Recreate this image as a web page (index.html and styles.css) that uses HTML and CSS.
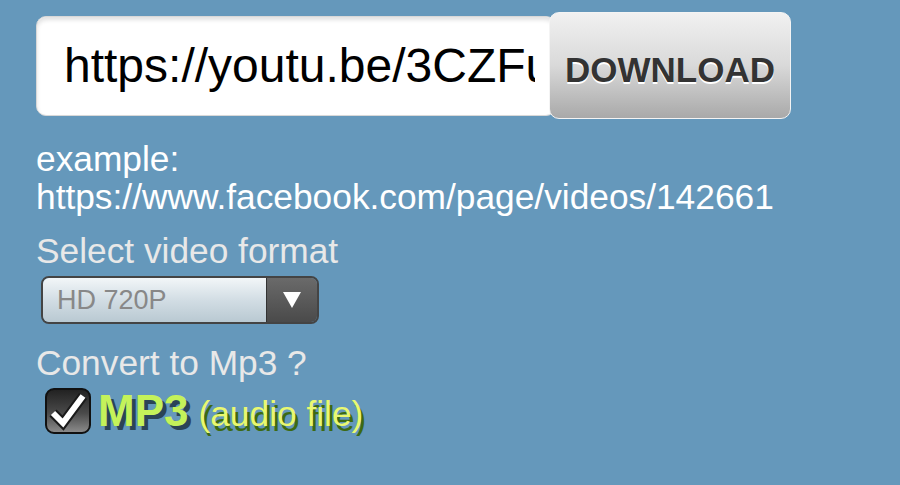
FILE: index.html
```html
<!DOCTYPE html>
<html lang="en">
<head>
    <meta charset="UTF-8">
    <meta name="viewport" content="width=device-width, initial-scale=1.0">
    <title>Video Downloader</title>
    <link rel="stylesheet" href="styles.css">
</head>
<body>
    <div class="container">
        <form class="url-form">
            <input type="text" class="url-input" value="https://youtu.be/3CZFuHnxsMk">
            <button type="button" class="download-btn">DOWNLOAD</button>
        </form>

        <div class="example">
            <div>example:</div>
            <div>https://www.facebook.com/page/videos/142661</div>
        </div>

        <div class="label">Select video format</div>
        <div class="format-select">
            <div class="format-value">HD 720P</div>
            <div class="format-arrow">
                <svg width="20" height="18" viewBox="0 0 20 18"><path d="M1 1 L19 1 L10 17 Z" fill="#fff"/></svg>
            </div>
        </div>

        <div class="label convert-label">Convert to Mp3 ?</div>
        <label class="mp3-option">
            <span class="checkbox">
                <svg class="check" width="42" height="42" viewBox="0 0 42 42">
                    <path d="M6 23 L16 33 L36 6" fill="none" stroke="#1a1a1a" stroke-width="10"/>
                    <path d="M6 23 L16 33 L36 6" fill="none" stroke="#fff" stroke-width="6"/>
                </svg>
            </span>
            <span class="mp3-text">MP3</span>
            <span class="audio-text">(audio file)</span>
        </label>
    </div>
</body>
</html>
```

FILE: styles.css
```css
body {
    margin: 0;
    background-color: #6598bb;
    font-family: 'Liberation Sans', Arial, sans-serif;
    color: #fff;
}

.container {
    padding: 12px 36px 0;
}

.url-form {
    display: flex;
    align-items: center;
    margin: 0;
}

.url-input {
    width: 520px;
    height: 100px;
    box-sizing: border-box;
    border: 1px solid #d8d8d8;
    border-radius: 10px;
    box-shadow: inset 0 3px 4px rgba(0, 0, 0, 0.12);
    padding: 0 20px 0 27px;
    font-family: 'Liberation Sans', Arial, sans-serif;
    font-size: 48px;
    color: #000;
    background-color: #fff;
    outline: none;
}

.download-btn {
    margin-left: -7px;
    width: 242px;
    height: 107px;
    border: 1px solid #f4f4f4;
    border-radius: 10px;
    background: linear-gradient(to bottom, #f1f1f1 0%, #d9d9d9 50%, #a9a9a9 100%);
    font-family: 'Liberation Sans', Arial, sans-serif;
    font-weight: bold;
    font-size: 35px;
    color: #333;
    text-shadow: 0 2px 0 #fff;
    padding: 8px 0 0;
    cursor: pointer;
}

.example {
    margin-top: 21px;
    font-size: 35.3px;
    line-height: 38px;
}

.label {
    margin-top: 16px;
    font-size: 35.3px;
    line-height: 38px;
    color: #e8e8e8;
}

.format-select {
    display: flex;
    width: 278px;
    height: 48px;
    box-sizing: border-box;
    margin: 6px 0 0 5px;
    border: 2px solid #444;
    border-radius: 8px;
    overflow: hidden;
}

.format-value {
    flex: 1;
    display: flex;
    align-items: center;
    padding-left: 14px;
    font-size: 27px;
    color: #888;
    background: linear-gradient(to bottom, #f2f6f8 0%, #d2dde4 50%, #b9c9d2 100%);
}

.format-arrow {
    width: 50px;
    display: flex;
    align-items: center;
    justify-content: center;
    background: linear-gradient(to bottom, #6a6a6a, #4a4a4a);
    border-left: 1px solid #333;
}

.convert-label {
    margin-top: 20px;
}

.mp3-option {
    display: flex;
    align-items: center;
    margin-top: 4px;
    margin-left: 9px;
}

.checkbox {
    width: 46px;
    height: 46px;
    box-sizing: border-box;
    border: 2px solid #111;
    border-radius: 9px;
    background: linear-gradient(to bottom, #222 0%, #4a4a4a 55%, #8a8a8a 100%);
    display: flex;
    align-items: center;
    justify-content: center;
}

.check {
    overflow: visible;
}

.mp3-text {
    margin-left: 7px;
    font-weight: bold;
    font-size: 44px;
    color: #c4f25a;
    text-shadow: 4px 4px 0 #2b4456;
}

.audio-text {
    margin-left: 10px;
    margin-top: 6px;
    font-size: 35.3px;
    color: #e9f870;
    text-shadow: 3px 5px 0 #3c6a12;
}
```
